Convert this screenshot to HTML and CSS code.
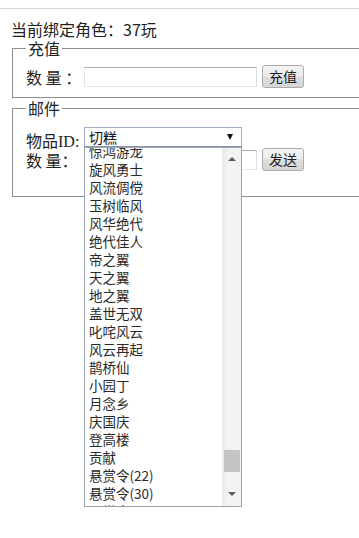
FILE: index.html
```html
<!DOCTYPE html>
<html lang="zh-CN">
<head>
<meta charset="utf-8">
<title>绑定角色</title>
<link rel="stylesheet" href="styles.css">
</head>
<body>
<div class="topline"></div>
<div class="title">当前绑定角色：37玩</div>
<section class="box box-charge">
  <div class="box-head"><span class="legend">充值</span></div>
  <div class="box-body">
    <div class="row">
      <span class="label">数 量 ：</span>
      <input class="text" type="text">
      <button class="btn" type="button">充值</button>
    </div>
  </div>
</section>
<section class="box box-mail">
  <div class="box-head"><span class="legend">邮件</span></div>
  <div class="box-body">
    <div class="row row-item">
      <span class="label label-id">物品ID:</span>
      <div class="select">
        <span class="select-value">切糕</span>
        <span class="select-arrow"></span>
        <div class="dropdown">
          <div class="options-viewport">
            <ul class="options">
              <li>惊鸿游龙</li>
              <li>旋风勇士</li>
              <li>风流倜傥</li>
              <li>玉树临风</li>
              <li>风华绝代</li>
              <li>绝代佳人</li>
              <li>帝之翼</li>
              <li>天之翼</li>
              <li>地之翼</li>
              <li>盖世无双</li>
              <li>叱咤风云</li>
              <li>风云再起</li>
              <li>鹊桥仙</li>
              <li>小园丁</li>
              <li>月念乡</li>
              <li>庆国庆</li>
              <li>登高楼</li>
              <li>贡献</li>
              <li>悬赏令(22)</li>
              <li>悬赏令(30)</li>
              <li>悬赏令(40)</li>
            </ul>
          </div>
          <div class="scrollbar">
            <div class="sb-btn sb-up"><span class="tri-up"></span></div>
            <div class="sb-track"><div class="sb-thumb"></div></div>
            <div class="sb-btn sb-down"><span class="tri-down"></span></div>
          </div>
        </div>
      </div>
    </div>
    <div class="row row-qty">
      <span class="label">数 量：</span>
      <input class="text" type="text">
      <button class="btn" type="button">发送</button>
    </div>
  </div>
</section>
</body>
</html>
```

FILE: styles.css
```css
body {
  margin: 0;
  min-height: 538px;
  background: #fff;
  color: #222;
  font-family: "Noto Sans CJK SC", "Noto Sans", sans-serif;
  font-size: 16px;
}

.topline {
  margin-top: 8px;
  border-top: 1px solid #d6d6d6;
}

.title {
  margin: 11px 0 0 11px;
  line-height: 18px;
  font-size: 16px;
}

.box {
  margin-left: 12px;
}

.box-head {
  display: flex;
  height: 20px;
}

.box-head::before {
  content: "";
  width: 13px;
  margin-top: 10px;
  border-top: 1px solid #8e8e8e;
  border-left: 1px solid #8e8e8e;
}

.box-head::after {
  content: "";
  flex: 1;
  margin-top: 10px;
  border-top: 1px solid #8e8e8e;
}

.legend {
  padding: 0 2px;
  font-size: 16px;
  line-height: 20px;
}

.box-body {
  padding: 7px 0 9px 13px;
  border: 1px solid #8e8e8e;
  border-top: none;
  border-right: none;
}

.box-mail .box-body {
  padding-top: 9px;
  padding-bottom: 25px;
}

.row {
  display: flex;
  align-items: center;
  height: 23px;
}

.label {
  width: 58px;
  flex: none;
  line-height: 20px;
  white-space: pre;
}

.text {
  box-sizing: border-box;
  width: 173px;
  height: 20px;
  margin: 0;
  padding: 0;
  border: 1px solid;
  border-color: #abadb3 #dbdfe6 #e3e9ef #e2e3ea;
  background: #fff;
}

.btn {
  box-sizing: border-box;
  width: 42px;
  height: 23px;
  margin: 0 0 0 5px;
  padding: 0;
  border: 1px solid #acacac;
  border-radius: 3px;
  background: linear-gradient(#f4f4f4, #ebebeb 50%, #dddddd 50%, #d6d6d6);
  color: #222;
  font-family: "Noto Sans CJK SC", sans-serif;
  font-size: 14px;
  line-height: 21px;
}

.row-item {
  align-items: flex-start;
  height: 20px;
}

.label-id {
  box-sizing: border-box;
  height: 20px;
  padding-top: 5px;
  font-family: "Liberation Serif", "Noto Sans CJK SC", serif;
}

.row-qty {
  margin-top: 1px;
}

.select {
  position: relative;
  box-sizing: border-box;
  width: 158px;
  height: 20px;
  padding-left: 4px;
  display: flex;
  align-items: center;
  border: 1px solid #a4b1c4;
  border-bottom-color: #8596ad;
  background: #fff;
  font-size: 14px;
  color: #111;
}

.select-value {
  line-height: 18px;
}

.select-arrow {
  margin-left: auto;
  margin-right: 8px;
  width: 0;
  height: 0;
  border-left: 3.5px solid transparent;
  border-right: 3.5px solid transparent;
  border-top: 6px solid #111;
}

.dropdown {
  position: absolute;
  left: -1px;
  top: 19px;
  z-index: 2;
  box-sizing: border-box;
  width: 158px;
  height: 360px;
  display: flex;
  border: 1px solid #9aa3ae;
  background: #fff;
}

.options-viewport {
  flex: 1;
  overflow: hidden;
}

.options {
  list-style: none;
  margin: -6px 0 0;
  padding: 0;
}

.options li {
  height: 18px;
  padding-left: 4px;
  line-height: 18px;
  font-size: 13.5px;
  color: #2a2a2a;
  white-space: nowrap;
}

.scrollbar {
  width: 19px;
  flex: none;
  display: flex;
  flex-direction: column;
  background: linear-gradient(to right, #e9e9e9, #f4f4f4 35%, #f2f2f2);
}

.sb-btn {
  display: flex;
  align-items: center;
  justify-content: center;
}

.sb-up {
  height: 21px;
}

.sb-down {
  height: 24px;
}

.sb-track {
  flex: 1;
}

.sb-thumb {
  margin: 281px 1px 0 2px;
  height: 22px;
  background: #c4c4c4;
}

.tri-up,
.tri-down {
  width: 0;
  height: 0;
  border-left: 4px solid transparent;
  border-right: 4px solid transparent;
}

.tri-up {
  border-bottom: 4px solid #5c5c5c;
}

.tri-down {
  border-top: 4px solid #5c5c5c;
}
```
